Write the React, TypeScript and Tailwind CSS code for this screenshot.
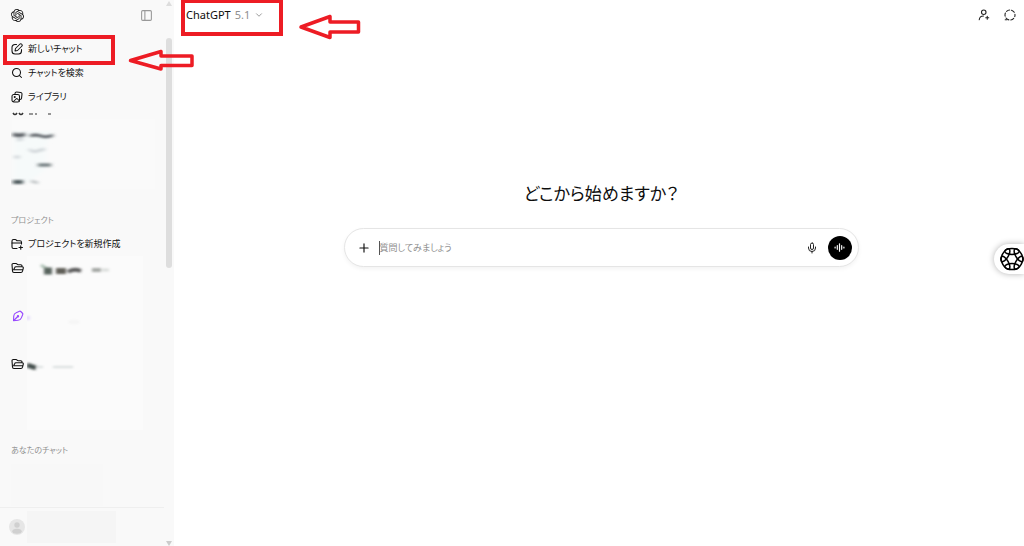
import type { ReactNode } from 'react';
import { ChevronDown, Mic, PanelLeft, Plus, Search } from 'lucide-react';
import { SiOpenai } from 'react-icons/si';

const NewChatIcon = () => (
  <svg viewBox="0 0 24 24" className="h-3 w-3" fill="none" stroke="currentColor" strokeWidth="2.100" strokeLinecap="round" strokeLinejoin="round">
    <path d="M11 3H8a6 6 0 0 0-6 6v7a6 6 0 0 0 6 6h7a6 6 0 0 0 6-6v-3" />
    <path d="M17.500 2.500a2.800 2.800 0 0 1 4 4L13 15l-5 1 1-5z" />
  </svg>
);

const LibraryIcon = () => (
  <svg viewBox="0 0 24 24" className="h-3 w-3" fill="none" stroke="currentColor" strokeWidth="2.100" strokeLinecap="round" strokeLinejoin="round">
    <path d="M8 6V5a3 3 0 0 1 3.300-3l8 .9a3 3 0 0 1 2.700 3.300l-.9 8a3 3 0 0 1-3.100 2.700" />
    <rect x="2" y="7" width="15" height="15" rx="3.500" />
    <circle cx="7.500" cy="12" r="1" />
    <path d="m5 21 5-5c1-1 2-1 3 0l4 4" />
  </svg>
);

const FolderNewIcon = () => (
  <svg viewBox="0 0 24 24" className="h-3 w-3" fill="none" stroke="currentColor" strokeWidth="2.200" strokeLinecap="round" strokeLinejoin="round">
    <path d="M12 21H5a3 3 0 0 1-3-3V6a3 3 0 0 1 3-3h3.500c1 0 1.500.4 2.200 1.200.6.800 1.200 1.300 2.300 1.300h5a3 3 0 0 1 3 3V12" />
    <path d="M2 10h19M19.500 15.500v7M16 19h7" />
  </svg>
);

const FolderOpenIcon = () => (
  <svg viewBox="0 0 26 24" className="h-3 w-[13px]" fill="none" stroke="currentColor" strokeWidth="2.200" strokeLinecap="round" strokeLinejoin="round">
    <path d="M22 9.500V8a2.500 2.500 0 0 0-2.500-2.500h-5c-1 0-1.600-.4-2.200-1.200C11.700 3.400 11 3 10 3H4.500A2.500 2.500 0 0 0 2 5.500l1 12.500a3 3 0 0 0 3 3h14c1.500 0 2.500-.8 2.900-2.200l1.600-6.200c.5-1.900-.5-3.100-2.300-3.100H10c-1.400 0-2.300.6-2.800 1.900L5.500 15.500" />
    <path d="M6 15.500h17" />
  </svg>
);

const PenNibIcon = () => (
  <svg viewBox="0 0 24 24" className="h-3 w-3" fill="none" stroke="currentColor" strokeWidth="2.200" strokeLinecap="round" strokeLinejoin="round">
    <path d="M3 21.500 3.500 12c.2-3 2-5.500 4.800-6.600L15 2.500c1-.4 1.800-.2 2.500.5L21 6.500c.7.700.9 1.500.5 2.500l-2.800 6.700c-1.100 2.800-3.600 4.600-6.600 4.800z" />
    <path d="m3.500 21 7.500-7.500" />
    <circle cx="12" cy="12.500" r="1.300" />
  </svg>
);

const AddPersonIcon = () => (
  <svg viewBox="0 0 24 24" className="h-3 w-3" fill="none" stroke="currentColor" strokeWidth="2.200" strokeLinecap="round">
    <circle cx="11.500" cy="6.500" r="4.500" />
    <path d="M2.500 21.500c.5-5 4-7.500 8.500-7.500M18.500 14.500v6M15.500 17.500h6" />
  </svg>
);

const TemporaryChatIcon = () => (
  <svg viewBox="0 0 24 24" className="h-3 w-3" fill="none" stroke="currentColor" strokeWidth="2.200" strokeLinecap="round">
    <circle cx="12" cy="12" r="10" strokeDasharray="6.500 3.972" strokeDashoffset="3.250" />
    <path d="M2.500 21.500h3.500" />
  </svg>
);

const VoiceIcon = () => (
  <svg viewBox="0 0 12 12" className="h-[11px] w-[11px]" stroke="currentColor" strokeWidth="1.300" strokeLinecap="round">
    <path d="M1.200 5.500v1M3.600 4v4M6 2v8M8.400 4v4M10.800 5.500v1" />
  </svg>
);

const petals = [0, 60, 120, 180, 240, 300];

const FlowerIcon = () => (
  <svg viewBox="0 0 24 24" className="h-6 w-6" fill="none" stroke="black" strokeWidth="1.500">
    {petals.map((angle) => (
      <ellipse key={angle} cx="12" cy="4.400" rx="7.200" ry="3" transform={`rotate(${angle} 12 12)`} />
    ))}
  </svg>
);

const CutOffRow = () => (
  <svg viewBox="0 0 150 8" className="h-2 w-[150px]" fill="none" stroke="#333">
    <path d="M2 2q2 3 4 0M8 2q2 3 4 0" strokeWidth="1.500" />
    <path d="M18 3h4M24 3h2M37 3h3" strokeWidth="1.200" />
  </svg>
);

const SmudgedApps = () => (
  <svg viewBox="0 0 150 72" className="h-[72px] w-[150px]">
    <defs>
      <filter id="smudge-apps" x="-20%" y="-20%" width="140%" height="140%">
        <feGaussianBlur stdDeviation="2 .9" />
      </filter>
    </defs>
    <rect x="1" width="143" height="70" fill="#fafafa" />
    <path d="M3 12h40l-8 14v24l-18 14H3z" fill="#f6fafa" filter="url(#smudge-apps)" />
    <g filter="url(#smudge-apps)" fill="none">
      <path d="M2 15q6 3 12 0" stroke="#5b6065" strokeWidth="4" />
      <path d="M19 17q5-2 11 0t12-1" stroke="#5c6166" strokeWidth="2.800" />
      <path d="M6 21l6-1M18 30q4 4 8 2l8-2M3 38h6" stroke="#d3d8db" strokeWidth="3" />
      <path d="M27 46h13" stroke="#707a7d" strokeWidth="3.200" />
      <path d="M2 63h10" stroke="#4d585b" strokeWidth="4" />
      <path d="M20 62l7 2" stroke="#babfc1" strokeWidth="2.500" />
    </g>
  </svg>
);

const SmudgedProjects = () => (
  <svg viewBox="0 0 118 180" className="h-[180px] w-[118px]">
    <defs>
      <filter id="smudge-projects" x="-20%" y="-20%" width="140%" height="140%">
        <feGaussianBlur stdDeviation="1.600 1.100" />
      </filter>
    </defs>
    <rect width="116" height="174" fill="#fbfbfb" />
    <g filter="url(#smudge-projects)" fill="none">
      <path d="M14 9l6 4" stroke="#abc0b3" strokeWidth="3" />
      <path d="M17 15h8" stroke="#59645d" strokeWidth="7" />
      <path d="M29 15h10" stroke="#615e59" strokeWidth="6" />
      <path d="M41 16q5-4 13-1" stroke="#5b5b5b" strokeWidth="4" />
      <path d="M65 14h9" stroke="#a5a8a5" strokeWidth="4" />
      <path d="M75 14h7" stroke="#dadddb" strokeWidth="3" />
      <path d="M1 64v-4" stroke="#ddd2fa" strokeWidth="3" />
      <path d="M42 66h10" stroke="#f5f5f5" strokeWidth="4" />
      <path d="M0 109l9 3" stroke="#45504d" strokeWidth="5" />
      <path d="M10 111h6M26 111h20" stroke="#d9dede" strokeWidth="2" />
    </g>
  </svg>
);

const navItems = [
  { label: '新しいチャット', icon: <NewChatIcon /> },
  { label: 'チャットを検索', icon: <Search className="h-3 w-3" strokeWidth={2.1} /> },
  { label: 'ライブラリ', icon: <LibraryIcon /> },
];

function NavButton({ icon, children }: { icon: ReactNode; children: ReactNode }) {
  return (
    <button className="flex h-6 w-full shrink-0 items-center gap-1 text-[9px] text-[#111]">
      <span className="flex w-[13px]">{icon}</span>
      {children}
    </button>
  );
}

function Sidebar() {
  return (
    <aside className="relative flex w-[174px] shrink-0 flex-col bg-[#f9f9f9]">
      <div className="flex h-[30px] shrink-0 items-center justify-between pr-[21px] pl-[11px]">
        <a href="#" aria-label="ChatGPT">
          <SiOpenai className="h-[13px] w-[13px] text-[#111]" />
        </a>
        <button aria-label="サイドバーを閉じる">
          <PanelLeft className="h-[13px] w-[13px] text-[#999]" strokeWidth={2} />
        </button>
      </div>

      <nav className="flex min-h-0 grow flex-col overflow-hidden pt-[7px] pl-[11px]">
        {navItems.map((item) => (
          <NavButton key={item.label} icon={item.icon}>{item.label}</NavButton>
        ))}
        <div className="mt-[2px] h-2 shrink-0">
          <CutOffRow />
        </div>
        <div className="h-[72px] shrink-0">
          <SmudgedApps />
        </div>

        <h2 className="mt-[17px] h-6 shrink-0 text-[8px] leading-6 text-[#8f8f8f]">プロジェクト</h2>
        <NavButton icon={<FolderNewIcon />}>プロジェクトを新規作成</NavButton>
        <div className="flex h-[182px] shrink-0 gap-[3px]">
          <div className="flex w-[13px] flex-col items-center pt-[6px] text-[#111]">
            <button aria-label="プロジェクト 1" className="flex h-12 items-start"><FolderOpenIcon /></button>
            <button aria-label="プロジェクト 2" className="flex h-12 items-start text-[#9747ff]"><PenNibIcon /></button>
            <button aria-label="プロジェクト 3" className="flex h-12 items-start"><FolderOpenIcon /></button>
          </div>
          <SmudgedProjects />
        </div>
        <h2 className="h-6 shrink-0 text-[8px] leading-6 text-[#8f8f8f]">あなたのチャット</h2>
        <div className="mt-[2px] h-[42px] w-[92px] shrink-0 bg-[#f8f8f8]" />
      </nav>

      <div className="mr-[10px] flex h-[39px] shrink-0 items-center gap-[2px] border-t border-[#efefef] pl-[9px]">
        <svg viewBox="0 0 16 16" className="h-4 w-4">
          <circle cx="8" cy="8" r="8" fill="#e6e6e6" />
          <circle cx="8" cy="6" r="2.700" fill="#d0d0d0" />
          <ellipse cx="8" cy="12.300" rx="4.700" ry="2.500" fill="#d0d0d0" />
        </svg>
        <div className="h-8 w-[89px] bg-[#f5f5f5]" />
      </div>

      <div className="absolute inset-y-0 right-[2px] flex w-[6px] flex-col items-center">
        <svg viewBox="0 0 6 5" className="mt-[1px] h-[5px] w-[6px]" fill="#ddd"><path d="M0 5 3 0l3 5z" /></svg>
        <div className="mt-8 h-[230px] w-[6px] rounded-full bg-[#dedede]" />
        <svg viewBox="0 0 6 5" className="mt-auto h-[5px] w-[6px]" fill="#ccc"><path d="m0 0 3 5 3-5z" /></svg>
      </div>
    </aside>
  );
}

function Composer() {
  return (
    <form className="flex h-[39px] w-full max-w-[515px] items-center rounded-full border border-[#e5e5e5] bg-white pr-[6px] pl-3 shadow-[0_2px_4px_rgba(0,0,0,0.05)]">
      <button type="button" aria-label="追加">
        <Plus className="h-[14px] w-[14px] text-[#111]" strokeWidth={2} />
      </button>
      <span className="ml-2 h-[14px] w-px bg-[#555]" />
      <input
        type="text"
        aria-label="質問"
        placeholder="質問してみましょう"
        className="min-w-0 grow text-[9px] outline-none placeholder:text-[#8f8f8f]"
      />
      <button type="button" aria-label="音声入力" className="mr-[10px]">
        <Mic className="h-3 w-3 text-[#222]" />
      </button>
      <button type="button" aria-label="音声モード" className="flex h-6 w-6 items-center justify-center rounded-full bg-black text-white">
        <VoiceIcon />
      </button>
    </form>
  );
}

function Annotations() {
  return (
    <div className="pointer-events-none absolute inset-0 overflow-hidden">
      <div className="absolute top-[35px] left-[3px] h-[30px] w-[112px] border-4 border-[#ed1c24]" />
      <div className="absolute -top-px left-[181px] h-[37px] w-[102px] border-4 border-[#ed1c24]" />
      <svg viewBox="0 0 66 24" className="absolute top-[48px] left-[128px] h-6 w-[66px]" fill="none" stroke="#ed1c24" strokeWidth="3.500" strokeLinejoin="round">
        <path d="M2.500 12.500 33 3.500v4.500h31v9.500H33v3.500z" />
      </svg>
      <svg viewBox="0 0 64 28" className="absolute top-[13px] left-[298px] h-7 w-16" fill="none" stroke="#ed1c24" strokeWidth="3.500" strokeLinejoin="round">
        <path d="M3 14 32 3.500V9h28.500v10H32v5.500z" />
      </svg>
    </div>
  );
}

export default function App() {
  return (
    <div className="relative flex h-screen overflow-hidden bg-white font-['Noto_Sans','Noto_Sans_CJK_JP',sans-serif] text-[#0d0d0d] [font-feature-settings:'palt']">
      <Sidebar />
      <main className="flex min-w-0 grow flex-col">
        <header className="flex h-[30px] shrink-0 items-center justify-between pr-2 pl-3">
          <button className="flex items-center gap-1 text-[11px]">
            <span>ChatGPT</span>
            <span className="text-[#8f8f8f]">5.1</span>
            <ChevronDown className="h-[10px] w-[10px] text-[#888]" />
          </button>
          <div className="flex items-center gap-[14px] text-[#222]">
            <button aria-label="ユーザーを追加"><AddPersonIcon /></button>
            <button aria-label="一時チャット"><TemporaryChatIcon /></button>
          </div>
        </header>
        <div className="flex flex-col items-center pt-[150px] pr-4 pl-5">
          <h1 className="mb-5 text-[17px] leading-7">どこから始めますか？</h1>
          <Composer />
        </div>
      </main>
      <button aria-label="拡張機能" className="absolute top-[244px] right-0 flex h-[30px] w-[30px] items-center justify-end rounded-l-full bg-white shadow-[0_0_6px_rgba(0,0,0,0.3)]">
        <FlowerIcon />
      </button>
      <Annotations />
    </div>
  );
}
